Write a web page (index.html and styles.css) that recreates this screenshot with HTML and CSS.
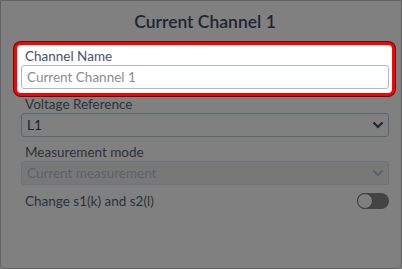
FILE: index.html
```html
<!DOCTYPE html>
<html lang="en">
<head>
<meta charset="UTF-8">
<meta name="viewport" content="width=device-width, initial-scale=1.0">
<title>Current Channel 1</title>
<link rel="stylesheet" href="styles.css">
</head>
<body>
<div class="dialog">
    <h2 class="title">Current Channel 1</h2>
    <div class="fields">
        <div class="field highlight">
            <label for="channelName">Channel Name</label>
            <input type="text" id="channelName" placeholder="Current Channel 1">
        </div>
        <div class="field">
            <label>Voltage Reference</label>
            <div class="select">
                <span>L1</span>
                <svg width="12" height="8" viewBox="0 0 12 8"><path d="M1.5 1.5 L6 6 L10.5 1.5" fill="none" stroke="currentColor" stroke-width="2.2"/></svg>
            </div>
        </div>
        <div class="field">
            <label>Measurement mode</label>
            <div class="select disabled">
                <span>Current measurement</span>
                <svg width="12" height="8" viewBox="0 0 12 8"><path d="M1.5 1.5 L6 6 L10.5 1.5" fill="none" stroke="currentColor" stroke-width="2.2"/></svg>
            </div>
        </div>
        <div class="toggle-row">
            <span>Change s1(k) and s2(l)</span>
            <div class="toggle"><div class="knob"></div></div>
        </div>
    </div>
</div>
</body>
</html>
```
FILE: styles.css
```css
body {
    margin: 0;
    background: #808080;
    font-family: "Source Sans Pro", Lato, sans-serif;
}
.dialog {
    width: 402px;
    height: 269px;
    box-sizing: border-box;
    border: 1px solid #626262;
    border-radius: 0 0 4px 4px;
    padding: 9px 12px 0 20px;
}
.title {
    margin: 0 0 13px;
    font-size: 17.5px;
    line-height: 24px;
    font-weight: 600;
    text-align: center;
    color: #1c2532;
}
.fields {
    display: flex;
    flex-direction: column;
    gap: 6px;
}
.field label {
    display: block;
    font-size: 13.5px;
    line-height: 18px;
    padding-left: 4px;
    color: #2c323a;
}
.highlight {
    background: #fff;
    border: 3px solid #f00;
    border-radius: 7px;
    box-shadow: 0 0 0 1px #5a1010;
    padding: 2px 3px 4px 4px;
    margin: -5px -6px -7px -7px;
}
.highlight label {
    color: #44546a;
}
.highlight input {
    display: block;
    width: 100%;
    height: 24px;
    box-sizing: border-box;
    border: 1px solid #a9bbd0;
    border-radius: 3px;
    padding: 0 5px;
    font-family: inherit;
    font-size: 13.5px;
    outline: none;
}
.highlight input::placeholder {
    color: #8c8c8c;
}
.select {
    height: 24px;
    box-sizing: border-box;
    border: 1px solid #5b6672;
    border-radius: 3px;
    display: flex;
    align-items: center;
    justify-content: space-between;
    padding: 0 4px 0 5px;
    font-size: 13.5px;
    color: #1d242d;
}
.select svg {
    color: #1c2634;
}
.select.disabled {
    background: #787878;
    border-color: #6d737a;
    color: #5d6167;
}
.select.disabled svg {
    color: #5b626b;
}
.toggle-row {
    display: flex;
    align-items: center;
    justify-content: space-between;
    height: 20px;
    padding-left: 4px;
    font-size: 13.5px;
    color: #2c323a;
}
.toggle {
    width: 32px;
    height: 16px;
    border-radius: 8px;
    background: #444;
    position: relative;
}
.knob {
    position: absolute;
    left: 0;
    top: 0;
    width: 14px;
    height: 14px;
    border-radius: 50%;
    background: #7f7f7f;
    border: 1px solid #3c3c3c;
}
```
